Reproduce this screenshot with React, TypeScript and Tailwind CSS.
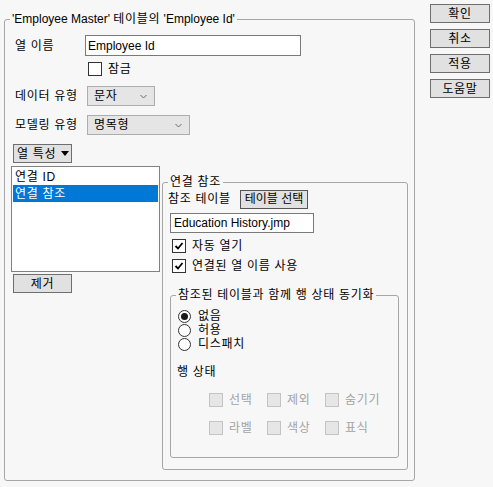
import { ReactNode } from 'react'

const FONT = { fontFamily: "'Liberation Sans', 'Noto Sans CJK KR', sans-serif" }

function Chevron() {
  return (
    <svg width="7" height="5" viewBox="0 0 7 5" className="shrink-0">
      <path d="M0.5 1 L3.5 4 L6.5 1" fill="none" stroke="#6b6b6b" strokeWidth="1" />
    </svg>
  )
}

function Check({ checked, disabled }: { checked?: boolean; disabled?: boolean }) {
  return (
    <div
      className={
        disabled
          ? 'w-[14px] h-[14px] border border-[#c3c3c3] bg-[#e6e6e6] shrink-0'
          : 'w-[14px] h-[14px] border border-[#333333] bg-white shrink-0 flex items-center justify-center'
      }
    >
      {checked && (
        <svg width="10" height="10" viewBox="0 0 10 10">
          <path d="M1.5 5 L4 7.5 L8.5 2" fill="none" stroke="#000" strokeWidth="1.8" />
        </svg>
      )}
    </div>
  )
}

function Radio({ on, label }: { on?: boolean; label: string }) {
  return (
    <div className="flex items-center h-[14px]">
      <div className="w-[13px] h-[13px] rounded-full border border-[#333333] bg-white flex items-center justify-center shrink-0">
        {on && <div className="w-[7px] h-[7px] rounded-full bg-[#1a1a1a]" />}
      </div>
      <span className="ml-[7px] leading-[14px] tracking-[0.7px]">{label}</span>
    </div>
  )
}

function Btn({ children, className = '' }: { children: ReactNode; className?: string }) {
  return (
    <div
      className={`h-[19px] bg-[#e1e1e1] border border-[#6e6e6e] flex items-center justify-center tracking-[0.7px] ${className}`}
    >
      {children}
    </div>
  )
}

function Group({ title, className, children }: { title: ReactNode; className: string; children: ReactNode }) {
  return (
    <fieldset className={`border border-[#a6a6a6] rounded-[3px] p-0 ${className}`}>
      <legend className="ml-[5px] px-[2px] leading-[16px]">{title}</legend>
      {children}
    </fieldset>
  )
}

export default function App() {
  return (
    <div className="w-[493px] h-[487px] bg-[#f7f7f7] flex text-[12px] leading-[16px] text-black" style={FONT}>
      <Group
        title={
          <>
            'Employee Master' <span className="tracking-[0.7px]">테이블의</span> 'Employee Id'
          </>
        }
        className="ml-[4px] mt-[11px] w-[411px] h-[470px]"
      >
        <div className="pl-[6px] flex flex-col tracking-[0.7px]">
          {/* Column name */}
          <div className="flex items-center h-[21px] mt-[8px]">
            <span className="w-[74px] pl-[4px]">열 이름</span>
            <div className="w-[216px] h-[21px] border border-[#7a7a7a] bg-white flex items-center pl-[2px] tracking-normal">
              Employee Id
            </div>
          </div>
          <div className="flex items-center h-[14px] mt-[6px] ml-[77px]">
            <Check />
            <span className="ml-[6px]">잠금</span>
          </div>

          {/* Data type */}
          <div className="flex items-center h-[20px] mt-[10px]">
            <span className="w-[76px] pl-[4px]">데이터 유형</span>
            <div className="w-[68px] h-[20px] border border-[#adadad] bg-[#e5e5e5] flex items-center justify-between pl-[6px] pr-[7px]">
              <span>문자</span>
              <Chevron />
            </div>
          </div>
          <div className="flex items-center h-[20px] mt-[9px]">
            <span className="w-[76px] pl-[4px]">모델링 유형</span>
            <div className="w-[103px] h-[20px] border border-[#adadad] bg-[#e5e5e5] flex items-center justify-between pl-[6px] pr-[7px]">
              <span>명목형</span>
              <Chevron />
            </div>
          </div>

          {/* Column properties */}
          <Btn className="w-[59px] h-[18px] mt-[9px] ml-[2px] justify-start pl-[3px] gap-[5px]">
            <span>열 특성</span>
            <svg width="8" height="5" viewBox="0 0 8 5">
              <path d="M0 0 L8 0 L4 5 Z" fill="#000" />
            </svg>
          </Btn>

          <div className="flex items-start mt-[3px]">
            <div className="flex flex-col">
              <div className="w-[149px] h-[106px] border border-[#828282] bg-white pt-[1px] px-[1px]">
                <div className="h-[17px] flex items-center pl-[2px]">연결 ID</div>
                <div className="h-[17px] flex items-center pl-[2px] bg-[#0078d7] text-white">연결 참조</div>
              </div>
              <Btn className="w-[59px] h-[19px] mt-[2px] ml-[2px]">제거</Btn>
            </div>

            <Group title="연결 참조" className="ml-[2px] mt-[8px] w-[246px] h-[296px]">
              <div className="pl-[5px] flex flex-col">
                <div className="flex items-center h-[18px]">
                  <span className="w-[72px]">참조 테이블</span>
                  <Btn className="w-[68px] h-[18px] border-[#555555] tracking-normal">테이블 선택</Btn>
                </div>
                <div className="w-[144px] h-[20px] mt-[5px] ml-[2px] border border-[#7a7a7a] bg-white flex items-center pl-[3px] tracking-normal">
                  Education History.jmp
                </div>
                <div className="flex items-center h-[14px] mt-[6px] ml-[4px]">
                  <Check checked />
                  <span className="ml-[6px]">자동 열기</span>
                </div>
                <div className="flex items-center h-[14px] mt-[6px] ml-[4px]">
                  <Check checked />
                  <span className="ml-[6px]">연결된 열 이름 사용</span>
                </div>

                <Group title="참조된 테이블과 함께 행 상태 동기화" className="ml-[2px] mt-[14px] w-[229px] h-[171px]">
                  <div className="pl-[7px] flex flex-col">
                    <div className="mt-[6px] flex flex-col">
                      <Radio on label="없음" />
                      <Radio label="허용" />
                      <Radio label="디스패치" />
                    </div>
                    <div className="mt-[13px] -ml-[1px]">행 상태</div>
                    <div className="ml-[31px] mt-[12px] grid grid-cols-[58px_58px_58px] gap-y-[12px] text-[#a3a3a3]">
                      {['선택', '제외', '숨기기', '라벨', '색상', '표식'].map(t => (
                        <div key={t} className="flex items-center h-[16px]">
                          <Check disabled />
                          <span className="ml-[6px]">{t}</span>
                        </div>
                      ))}
                    </div>
                  </div>
                </Group>
              </div>
            </Group>
          </div>
        </div>
      </Group>

      {/* Dialog buttons */}
      <div className="ml-[15px] mt-[4px] flex flex-col gap-[6px]">
        <Btn className="w-[60px]">확인</Btn>
        <Btn className="w-[60px]">취소</Btn>
        <Btn className="w-[60px]">적용</Btn>
        <Btn className="w-[60px]">도움말</Btn>
      </div>
    </div>
  )
}
